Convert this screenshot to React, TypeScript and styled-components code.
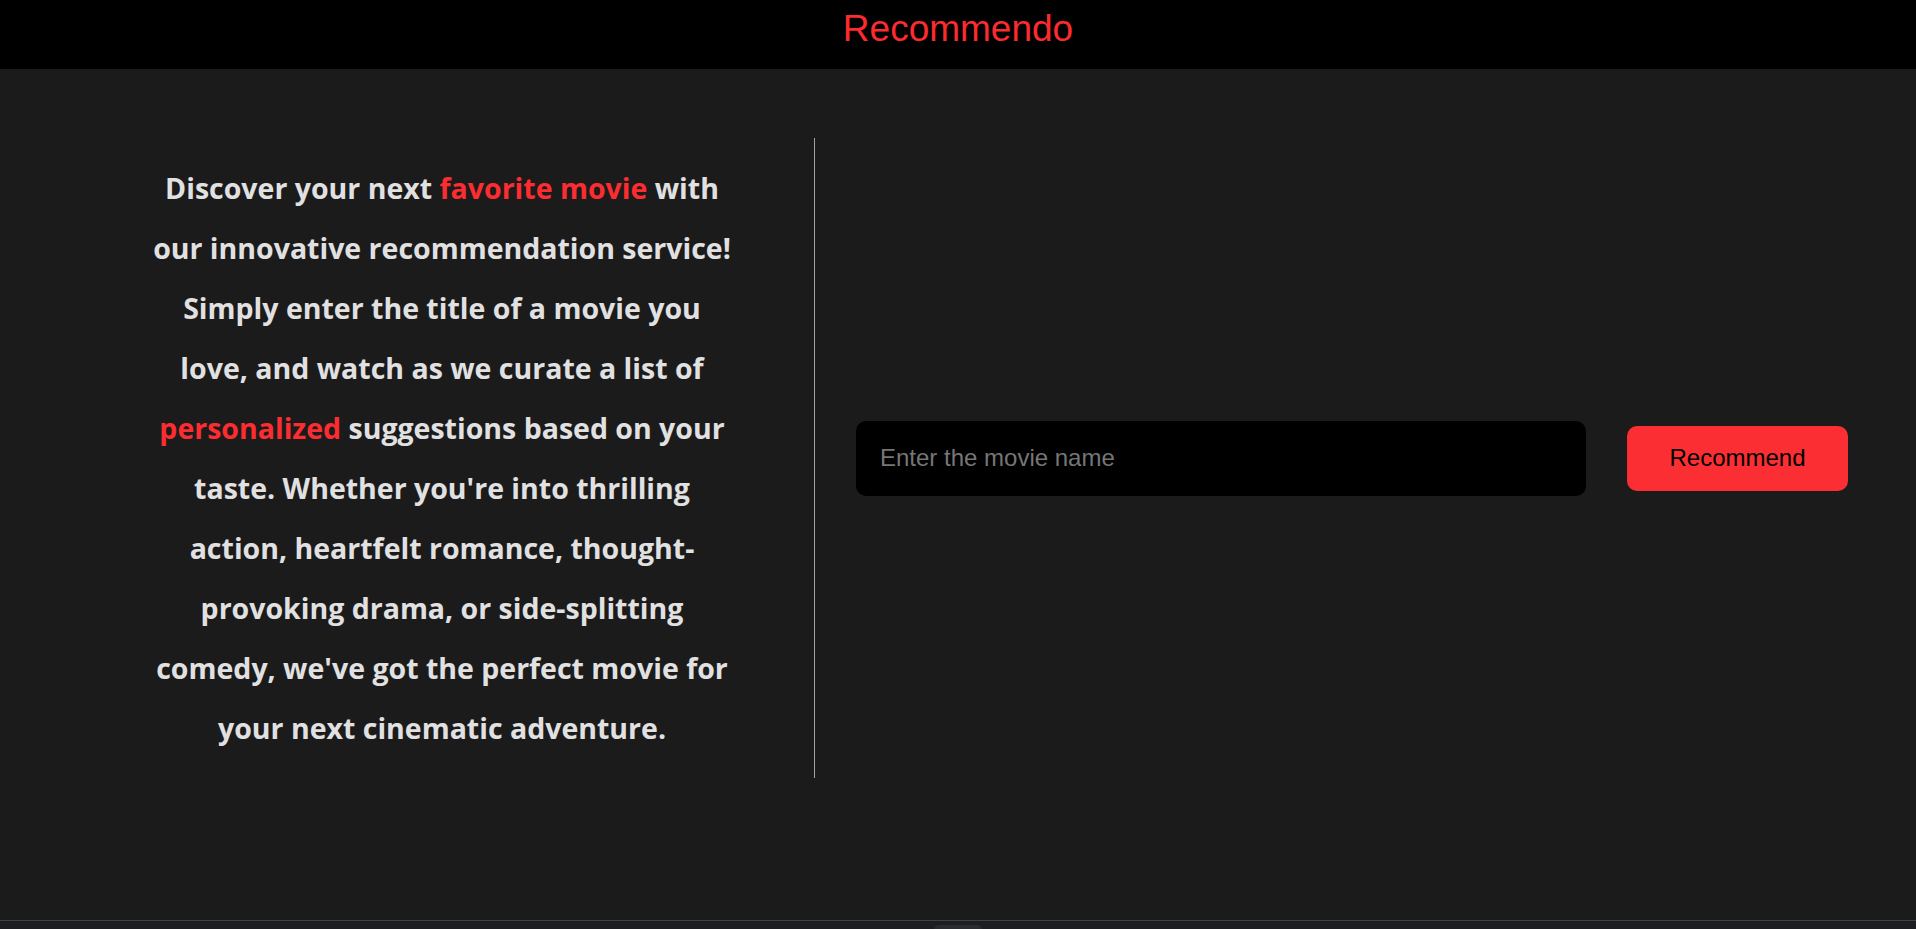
import React, {useState} from 'react';
import styled, {createGlobalStyle} from 'styled-components';

const GlobalStyle = createGlobalStyle`
  html, body {
    margin: 0;
    padding: 0;
    background: #1c1b1c;
  }
  * {
    box-sizing: border-box;
  }
`;

const App = () => {
  const [movie, setMovie] = useState('');
  return (
    <>
      <GlobalStyle />
      <Page>
        <Header>
          <Logo>Recommendo</Logo>
        </Header>
        <Main>
          <Intro>
            <IntroText>
              Discover your next <Accent>favorite movie</Accent> with our innovative
              recommendation service! Simply enter the title of a movie you love, and
              watch as we curate a list of <Accent>personalized</Accent> suggestions
              based on your taste. Whether you're into thrilling action, heartfelt
              romance, thought-provoking drama, or side-splitting comedy, we've got the
              perfect movie for your next cinematic adventure.
            </IntroText>
          </Intro>
          <SearchArea>
            <SearchInput
              placeholder="Enter the movie name"
              value={movie}
              onChange={(e) => setMovie(e.target.value)}
            />
            <RecommendBtn>Recommend</RecommendBtn>
          </SearchArea>
        </Main>
        <Footer>
          <FooterTab />
        </Footer>
      </Page>
    </>
  );
};

export default App;

const Page = styled.div`
  display: flex;
  flex-direction: column;
  min-height: 100vh;
  background: #1c1b1c;
`;

const Header = styled.header`
  display: flex;
  justify-content: center;
  align-items: flex-start;
  height: 69px;
  padding-top: 8px;
  background: #000000;
`;

const Logo = styled.h1`
  margin: 0;
  font-family: 'Liberation Sans', Arial, sans-serif;
  font-size: 37px;
  font-weight: 400;
  color: #fb2b2e;
`;

const Main = styled.main`
  display: flex;
  align-items: center;
  padding: 69px 0 142px 0;
`;

const Intro = styled.section`
  width: 815px;
  padding: 20px 76px 20px 146px;
  border-right: 1px solid #a3a3a3;
`;

const IntroText = styled.p`
  margin: 0;
  font-family: 'Open Sans', 'Noto Sans', sans-serif;
  font-size: 28.5px;
  font-weight: 700;
  line-height: 60px;
  text-align: center;
  color: #e2e1e2;
`;

const Accent = styled.span`
  color: #fb2d30;
`;

const SearchArea = styled.section`
  display: flex;
  align-items: center;
  flex: 1;
  gap: 41px;
  padding: 0 68px 0 41px;
`;

const SearchInput = styled.input`
  flex: 1;
  height: 75px;
  padding: 0 24px;
  border: none;
  border-radius: 10px;
  outline: none;
  background: #000000;
  font-family: 'Liberation Sans', Arial, sans-serif;
  font-size: 24px;
  color: #ffffff;
  &::placeholder {
    color: #767676;
  }
`;

const RecommendBtn = styled.button`
  width: 221px;
  height: 65px;
  border: none;
  border-radius: 10px;
  background: #fb2f33;
  font-family: 'Liberation Sans', Arial, sans-serif;
  font-size: 24px;
  color: #000000;
  cursor: pointer;
`;

const Footer = styled.footer`
  display: flex;
  justify-content: center;
  height: 40px;
  padding-top: 4px;
  border-top: 1px solid #414244;
  background: #1d1e21;
`;

const FooterTab = styled.div`
  width: 48px;
  height: 20px;
  border-radius: 5px 5px 0 0;
  background: #2a2b2e;
`;
